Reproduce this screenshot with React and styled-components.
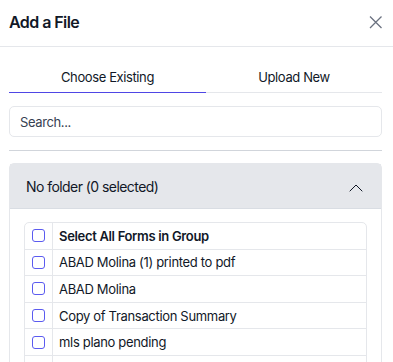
import React from "react";
import styled, { createGlobalStyle } from "styled-components";

const GlobalStyle = createGlobalStyle`
  * { box-sizing: border-box; }
  body {
    margin: 0;
    font-family: Inter, "Noto Sans", sans-serif;
    color: #111827;
    background: #ffffff;
  }
`;

const Modal = styled.div`
  width: 393px;
  height: 362px;
  overflow: hidden;
  background: #fff;
`;

const Header = styled.div`
  display: flex;
  align-items: center;
  justify-content: space-between;
  height: 47px;
  padding: 0 9px 2px 9px;
  border-bottom: 1px solid #e5e7eb;
`;

const Title = styled.h2`
  margin: 0;
  font-size: 16px;
  font-weight: 600;
  letter-spacing: -0.035em;
  color: #111827;
`;

const CloseButton = styled.button`
  border: 0;
  background: none;
  padding: 0;
  display: flex;
  color: #6b7280;
  cursor: pointer;
`;

const Body = styled.div`
  padding: 18px 11px 0 9px;
`;

const Tabs = styled.div`
  display: flex;
`;

const Tab = styled.button`
  flex: ${({ active }) => (active ? "0 0 197px" : "1")};
  border: 0;
  background: none;
  font-family: inherit;
  font-size: 13px;
  letter-spacing: -0.03em;
  color: #111827;
  height: 28px;
  padding: 0 0 4px;
  border-bottom: 1px solid ${({ active }) => (active ? "#4f46e5" : "#e5e7eb")};
`;

const SearchInput = styled.input`
  display: block;
  width: 100%;
  height: 31px;
  margin-top: 13px;
  padding: 0 10px;
  border: 1px solid #e5e7eb;
  border-radius: 5px;
  font-family: inherit;
  font-size: 13px;
  letter-spacing: -0.03em;
  color: #111827;
  &::placeholder { color: #374151; }
`;

const Divider = styled.hr`
  margin: 13px 0 12px;
  border: 0;
  border-top: 1px solid #d1d5db;
`;

const Accordion = styled.div`
  border: 1px solid #e5e7eb;
  border-radius: 5px 5px 0 0;
`;

const AccordionHeader = styled.div`
  display: flex;
  align-items: center;
  justify-content: space-between;
  height: 45px;
  padding: 0 18px 0 16px;
  background: #e5e7eb;
  font-size: 14px;
  letter-spacing: -0.04em;
  color: #111827;
  border-bottom: 1px solid #d9dde3;
`;

const Chevron = styled.svg`
  margin-top: 3px;
`;

const AccordionBody = styled.div`
  padding: 13px 14px 0;
`;

const Table = styled.div`
  border: 1px solid #e5e7eb;
  border-radius: 5px 5px 0 0;
`;

const Row = styled.div`
  display: flex;
  height: 26.6px;
  border-bottom: 1px solid #e5e7eb;
`;

const CheckCell = styled.div`
  width: 28px;
  display: flex;
  align-items: center;
  justify-content: center;
  border-right: 1px solid #e5e7eb;
`;

const Checkbox = styled.span`
  width: 13px;
  height: 13px;
  border: 1.5px solid #5b5bf0;
  border-radius: 3px;
`;

const NameCell = styled.div`
  display: flex;
  align-items: center;
  padding-left: 6px;
  font-size: 13px;
  letter-spacing: -0.025em;
  font-weight: ${({ bold }) => (bold ? 600 : 400)};
  color: #111827;
`;

const files = [
  "ABAD Molina (1) printed to pdf",
  "ABAD Molina",
  "Copy of Transaction Summary",
  "mls plano pending",
  "",
];

export default function App() {
  return (
    <Modal>
      <GlobalStyle />
      <Header>
        <Title>Add a File</Title>
        <CloseButton aria-label="Close">
          <svg width="16" height="16" viewBox="0 0 16 16" fill="none" stroke="currentColor" strokeWidth="1.3">
            <path d="M2 2.5l11.5 11.5M13.5 2.5L2 14" />
          </svg>
        </CloseButton>
      </Header>
      <Body>
        <Tabs>
          <Tab active>Choose Existing</Tab>
          <Tab>Upload New</Tab>
        </Tabs>
        <SearchInput placeholder="Search..." />
        <Divider />
        <Accordion>
          <AccordionHeader>
            <span>No folder (0 selected)</span>
            <Chevron width="14" height="8" viewBox="0 0 14 8" fill="none" stroke="#111827" strokeWidth="1">
              <path d="M0.7 7.3L7 1l6.3 6.3" />
            </Chevron>
          </AccordionHeader>
          <AccordionBody>
            <Table>
              <Row>
                <CheckCell><Checkbox /></CheckCell>
                <NameCell bold>Select All Forms in Group</NameCell>
              </Row>
              {files.map((f, i) => (
                <Row key={i}>
                  <CheckCell>{f && <Checkbox />}</CheckCell>
                  <NameCell>{f}</NameCell>
                </Row>
              ))}
            </Table>
          </AccordionBody>
        </Accordion>
      </Body>
    </Modal>
  );
}
